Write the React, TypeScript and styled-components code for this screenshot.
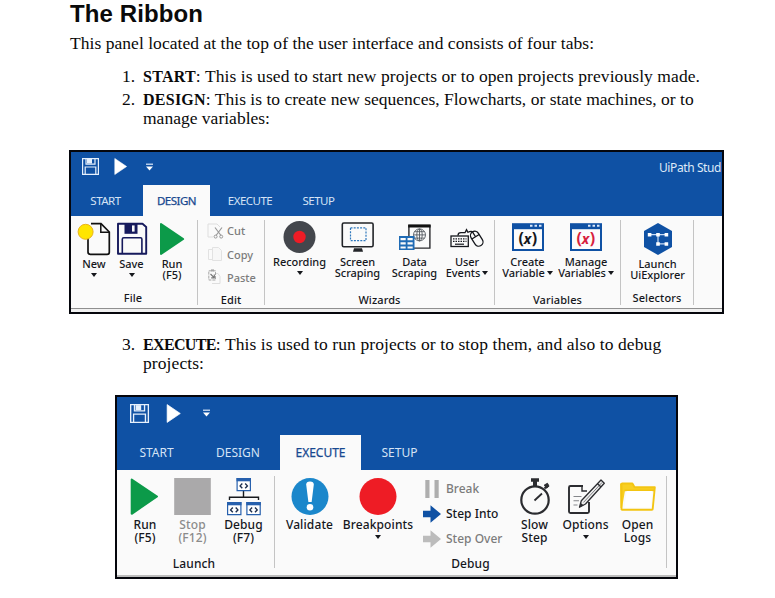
import React from "react";
import styled, { createGlobalStyle, css } from "styled-components";

const BLUE = "#0f51a4";
const NAVY = "#161a5c";

const GlobalStyle = createGlobalStyle`
  * { box-sizing: border-box; }
  body { margin: 0; background: #fff; overflow: hidden; }
  svg { display: block; flex: none; overflow: visible; }
`;

/* ---------- document text ---------- */

const Page = styled.main`
  width: 775px;
  height: 598px;
  padding-left: 69px;
  background: #fff;
  color: #0a0a0a;
  font-family: "Palatino Linotype", "Book Antiqua", "Liberation Serif", serif;
  font-size: 17.5px;
  line-height: 20px;
`;

const Heading = styled.h1`
  margin: 0 0 5px 1px;
  font: bold 24px/28px "Liberation Sans", Arial, sans-serif;
  letter-spacing: 0.1px;
`;

const Paragraph = styled.p`
  margin: 0 0 0 1px;
  letter-spacing: 0.04px;
`;

const Steps = styled.ol<{ $top: number; $height: number }>`
  list-style: none;
  margin: ${(p) => p.$top}px 0 0;
  padding: 0 0 0 53px;
  height: ${(p) => p.$height}px;
  display: flex;
  flex-direction: column;
  gap: 3px;
`;

const Step = styled.li`
  display: grid;
  grid-template-columns: 21px auto;
  align-items: start;
  white-space: nowrap;
  line-height: 20px;
`;

const StepText = styled.div<{ $spacing: number }>`
  letter-spacing: ${(p) => p.$spacing}px;
`;

const Continuation = styled.div`
  margin-top: -1px;
`;

const Term = styled.b<{ $spacing: number }>`
  font-size: 16px;
  line-height: 1;
  letter-spacing: ${(p) => p.$spacing}px;
`;

/* ---------- ribbon shell ---------- */

const Ribbon = styled.section<{ $large?: boolean }>`
  width: ${(p) => (p.$large ? 563 : 655)}px;
  height: ${(p) => (p.$large ? 184 : 164)}px;
  margin-left: ${(p) => (p.$large ? 46 : 0)}px;
  border: 2px solid #05060c;
  background: #fafafa;
  color: #15171c;
  font-family: "Noto Sans", sans-serif;
  font-size: ${(p) => (p.$large ? 12 : 11)}px;
  font-weight: 500;
  line-height: ${(p) => (p.$large ? 13 : 11)}px;
  display: flex;
  flex-direction: column;
  overflow: hidden;
`;

const TitleBar = styled.header<{ $large?: boolean }>`
  height: ${(p) => (p.$large ? 38 : 33)}px;
  flex: none;
  background: ${BLUE};
  display: flex;
  align-items: flex-start;
  padding: ${(p) => (p.$large ? "7px 0 0 13px" : "6px 0 0 11px")};
  gap: ${(p) => (p.$large ? 17 : 15)}px;
`;

const AppTitle = styled.span`
  margin: 4px 1px 0 auto;
  color: #dfe9f7;
  font-size: 12px;
  font-weight: 400;
  letter-spacing: -0.4px;
  white-space: nowrap;
`;

const TabStrip = styled.nav<{ $large?: boolean }>`
  height: ${(p) => (p.$large ? 35 : 31)}px;
  flex: none;
  display: flex;
  background: ${BLUE};
`;

const Tab = styled.span<{ $width: number; $active?: boolean; $large?: boolean; $end?: number }>`
  width: ${(p) => p.$width}px;
  margin-right: ${(p) => p.$end ?? 0}px;
  flex: none;
  display: flex;
  align-items: center;
  justify-content: center;
  font-weight: 400;
  font-size: ${(p) => (p.$large ? 12 : 11.5)}px;
  letter-spacing: ${(p) => (p.$large ? 0 : -0.5)}px;
  color: #d5e3f5;
  ${(p) =>
    p.$active &&
    css`
      background: #fafafa;
      color: #17488f;
      -webkit-text-stroke: 0.25px #17488f;
    `}
`;

const Body = styled.div<{ $large?: boolean }>`
  height: ${(p) => (p.$large ? 105 : 92)}px;
  flex: none;
  display: flex;
`;

const Footer = styled.div<{ $large?: boolean }>`
  flex: 1;
  border-top: ${(p) => (p.$large ? 2 : 1)}px solid ${(p) => (p.$large ? "#bdbdbd" : "#8f8f8f")};
  background: #f0f0f0;
`;

/* ---------- ribbon groups ---------- */

const Group = styled.div<{ $width: number }>`
  width: ${(p) => p.$width}px;
  flex: none;
  display: flex;
  flex-direction: column;
`;

const Divider = styled.i<{ $large?: boolean }>`
  width: 1px;
  flex: none;
  height: ${(p) => (p.$large ? 92 : 85)}px;
  margin-top: ${(p) => (p.$large ? 6 : 4)}px;
  background: #c4c4c4;
`;

const Tools = styled.div<{ $height: number }>`
  height: ${(p) => p.$height}px;
  flex: none;
  display: flex;
`;

const GroupName = styled.div<{ $shift?: number }>`
  text-align: center;
  line-height: 12px;
  letter-spacing: 0.1px;
  padding-left: ${(p) => Math.max(0, p.$shift ?? 0)}px;
  padding-right: ${(p) => Math.max(0, -(p.$shift ?? 0))}px;
`;

const ToolBox = styled.div<{ $width: number; $muted?: boolean; $gap: number; $large?: boolean }>`
  width: ${(p) => p.$width}px;
  flex: none;
  padding-top: ${(p) => (p.$large ? 8 : 6)}px;
  display: flex;
  flex-direction: column;
  align-items: center;
  white-space: nowrap;
  letter-spacing: ${(p) => (p.$large ? 0.12 : -0.05)}px;
  color: ${(p) => (p.$muted ? "#8b8b8b" : "inherit")};

  > svg:first-child {
    margin-bottom: ${(p) => p.$gap}px;
  }
`;

const LabelLine = styled.span`
  display: flex;
  align-items: center;
  gap: 2px;
`;

const Caret = styled.i<{ $below?: boolean }>`
  border: 3.5px solid transparent;
  border-top: 4px solid #15171c;
  border-bottom-width: 0;
  margin-top: ${(p) => (p.$below ? 4 : 1)}px;
`;

const SideList = styled.div<{ $width: number; $pad: number; $top: number; $row: number }>`
  width: ${(p) => p.$width}px;
  flex: none;
  padding: ${(p) => p.$top}px 0 0 ${(p) => p.$pad}px;
  display: grid;
  grid-auto-rows: ${(p) => p.$row}px;
`;

const SideItem = styled.span<{ $muted?: boolean; $gap: number }>`
  display: flex;
  align-items: center;
  gap: ${(p) => p.$gap}px;
  white-space: nowrap;
  color: ${(p) => (p.$muted ? "#7c7c7c" : "inherit")};
`;

interface ToolProps {
  icon: React.ReactNode;
  lines: string[];
  width: number;
  gap?: number;
  caret?: "below" | "inline";
  muted?: boolean;
  large?: boolean;
}

const Tool = ({ icon, lines, width, gap = 2, caret, muted, large }: ToolProps) => (
  <ToolBox $width={width} $gap={gap} $muted={muted} $large={large}>
    {icon}
    {lines.map((line, i) => (
      <LabelLine key={line}>
        {line}
        {caret === "inline" && i === lines.length - 1 && <Caret />}
      </LabelLine>
    ))}
    {caret === "below" && <Caret $below />}
  </ToolBox>
);

/* ---------- icons ---------- */

const Icon = ({ size = 34, children }: { size?: number; children: React.ReactNode }) => (
  <svg width={size} height={size} viewBox={`0 0 ${size} ${size}`} fill="none">
    {children}
  </svg>
);

const QuickIcons = ({ large }: { large?: boolean }) => {
  const k = large ? 1.12 : 1;
  return (
    <>
      <svg width={17 * k} height={17 * k} viewBox="0 0 17 17" fill="none" stroke="#e6f0fc">
        <path d="M.6 .6h15.8v15.8H.6z" strokeWidth="1.2" />
        <path d="M4 .6v5.6h9V.6M3.2 16.4V9h10.6v7.4" strokeWidth="1.2" />
        <path d="M5 1h5v4.5H5z" fill="#e6f0fc" stroke="none" />
      </svg>
      <svg width={large ? 15 : 13} height={large ? 19 : 17} viewBox="0 0 13 17">
        <path d="M.8 .5 12.6 8.5.8 16.5z" fill="#fff" stroke="#fff" strokeWidth=".6" strokeLinejoin="round" />
      </svg>
      <svg width="15" height="18" viewBox={large ? "-1 0 15 18" : "0 0 15 18"}>
        <path d="M4 6.2h7" stroke="#dce9fa" strokeWidth="1.2" />
        <path d="M4 8.6h7L7.5 12.4z" fill="#fff" />
      </svg>
    </>
  );
};

const NewIcon = () => (
  <Icon>
    <path d="M11 15v15q0 2.3 2.3 2.3h17q2 0 2-2V10L24 1.7H14" stroke="#111" strokeWidth="1.7" />
    <path d="M23.8 2v8.2h8.2" stroke="#111" strokeWidth="1.5" />
    <circle cx="8.6" cy="9.8" r="7.5" fill="#ffe500" stroke="#eab31a" />
  </Icon>
);

const SaveIcon = () => (
  <Icon>
    <path d="M3 1.8h24.5L31.2 5v26.8H3z" stroke={NAVY} strokeWidth="1.9" strokeLinejoin="round" />
    <path d="M9.5 1.5h13v10.3h-13z" fill={NAVY} />
    <path d="M17 3.4h2.6v6.2H17z" fill="#fafafa" />
    <path d="M7.3 31.5V17.2q0-1.4 1.4-1.4h16.8q1.4 0 1.4 1.4v14.3" stroke={NAVY} strokeWidth="1.6" />
  </Icon>
);

const RunIcon = () => (
  <Icon>
    <path d="M6 2 28.2 17 6 32z" fill="#0c9a49" stroke="#0c9a49" strokeWidth="2" strokeLinejoin="round" />
  </Icon>
);

const RunLargeIcon = () => (
  <Icon size={38}>
    <path d="M5.7 1.5 31 18.5 5.700 35.8z" fill="#0c9a49" stroke="#0c9a49" strokeWidth="2" strokeLinejoin="round" />
  </Icon>
);

const CutIcon = () => (
  <svg width="17" height="16" viewBox="0 0 17 16" fill="none">
    <path d="M1 1h9l3 3M1 1v13h5" stroke="#dedede" />
    <path d="M8 4.5l6 8M15 4.5l-6 8" stroke="#9a9a9a" strokeWidth="1.2" />
    <circle cx="8.6" cy="13.6" r="1.5" stroke="#9a9a9a" />
    <circle cx="14.2" cy="13.6" r="1.5" stroke="#9a9a9a" />
  </svg>
);

const CopyIcon = () => (
  <svg width="17" height="16" viewBox="0 0 17 16" fill="none" stroke="#e2e2e2">
    <path d="M1.5 3.5h6l2 2v8h-8z" />
    <path d="M5.5 1.5h6l3 3v10h-9z" fill="#f7f7f7" />
  </svg>
);

const PasteIcon = () => (
  <svg width="17" height="16" viewBox="0 0 17 16" fill="none">
    <path d="M9 4.500h2l2 3v7H5" stroke="#dedede" />
    <path d="M1.800 1.800h6.700v9.200H1.800z" stroke="#a5a5a5" strokeDasharray="3 1" />
    <path d="M4 .400h3v2H4z" fill="#a5a5a5" />
    <path d="M3.500 5l3.600 3.600M7.300 5.500v3.300H4.200" stroke="#777" strokeWidth="1.200" />
  </svg>
);

const RecordingIcon = () => (
  <Icon>
    <circle cx="16.5" cy="15" r="16" fill="#43464c" />
    <circle cx="16.5" cy="15" r="6.2" fill="#ee1c25" />
  </Icon>
);

const ScreenIcon = () => (
  <Icon>
    <rect x="1.3" y="1" width="30.8" height="23.800" rx="1.500" stroke="#222428" strokeWidth="1.600" />
    <rect x="9.500" y="5.800" width="15.500" height="12.800" stroke="#2f78bd" strokeWidth="1.200" strokeDasharray="2 1.200" />
    <path d="M13 26.300h8l1 3.400H12z" fill="#222428" />
  </Icon>
);

const DataIcon = () => (
  <Icon>
    <path d="M10.900 3.500h21v22.600h-21z" stroke="#2b2b2e" strokeWidth="1.400" />
    <path d="M10.200 2.500h22.400v3H10.200z" fill="#111" />
    <g stroke="#555a61" strokeWidth=".9">
      <circle cx="21.500" cy="12.900" r="6" fill="#fafafa" />
      <ellipse cx="21.500" cy="12.900" rx="2.700" ry="6" />
      <path d="M15.500 12.900h12M16.500 9.700h10M16.500 16.100h10M21.500 7v12" />
    </g>
    <rect x="1" y="14" width="15.500" height="14" fill="#1f6bb5" />
    <path d="M2.500 16h5.200v2.200H2.500zM9.500 16h5.200v2.200H9.500zM2.500 20.200h5.200v2.200H2.500zM9.500 20.200h5.200v2.200H9.500zM2.500 24.400h5.200v2.200H2.500zM9.500 24.400h5.200v2.200H9.500z" fill="#fafafa" />
  </Icon>
);

const UserEventsIcon = () => (
  <Icon>
    <rect x="1" y="14" width="17.300" height="10.500" stroke="#15171c" strokeWidth="1.300" />
    <path d="M3 16.800h13.500M3 19.300h13.500" stroke="#15171c" strokeWidth="1.300" strokeDasharray="1.500 1" />
    <path d="M5 22.200h9" stroke="#15171c" strokeWidth="1.200" />
    <path d="M8 13.500q0-2.800 3-2.800h4l1.500-3 1.500 2.600q3-1.600 5-.3" stroke="#15171c" strokeWidth="1.300" />
    <g transform="rotate(-32 26.500 16.500)" stroke="#15171c" strokeWidth="1.300">
      <rect x="22.300" y="8.800" width="8.600" height="16" rx="4.300" />
      <path d="M22.300 14.500h8.600M26.600 9v5.500" />
    </g>
  </Icon>
);

const VariableText = styled.text`
  font: italic bold 14px "Noto Sans", sans-serif;
`;

const ParenText = styled.text`
  font: bold 16px "Noto Sans", sans-serif;
`;

const VariableIcon = ({ color }: { color: string }) => (
  <Icon>
    <path d="M2 3h30v25H2z" fill="#fcfcfc" stroke={BLUE} strokeWidth="2" />
    <path d="M1 1.200h32v6H1z" fill={BLUE} />
    <path d="M19 3.700h2.500M23.500 3.700H26M28 3.700h2.500" stroke="#dbe8fa" strokeWidth="2" />
    <ParenText x="7.600" y="22" fill={color}>(</ParenText>
    <VariableText x="12.800" y="22" fill={color}>x</VariableText>
    <ParenText x="20.800" y="22" fill={color}>)</ParenText>
  </Icon>
);

const ExplorerIcon = () => (
  <Icon>
    <path d="M17 1 31 9v16l-14 8-14-8V9z" fill={BLUE} />
    <path d="M8 12.700h18M17 12.700v9.200h9" stroke="#c9dcf5" strokeWidth="1.200" />
    <path d="M6.800 11h3.600v3.600H6.800zM15.200 11h3.600v3.600h-3.600zM23.600 11h3.600v3.600h-3.600zM15.200 20.200h3.600v3.600h-3.600zM23.600 20.200h3.600v3.600h-3.600z" fill="#fff" />
  </Icon>
);

const StopIcon = () => (
  <Icon size={38}>
    <rect x=".200" y="0" width="36.600" height="37" fill="#aaa9aa" />
  </Icon>
);

const CodeWindow = ({ x, y }: { x: number; y: number }) => (
  <g transform={`translate(${x} ${y})`}>
    <path d="M.600 .600h13.300v12H.600z" fill="#fff" stroke="#2760ad" strokeWidth="1.200" />
    <path d="M0 0h14.500v3.300H0z" fill="#2760ad" />
    <path d="M5.800 5.500 3.600 7.900l2.200 2.400M8.700 5.500l2.200 2.400-2.200 2.400" stroke="#1d2e4d" strokeWidth="1.400" />
  </g>
);

const DebugIcon = () => (
  <Icon size={38}>
    <path d="M18.500 12v7.500M4.500 22v-2.700h29V22" stroke="#17191d" strokeWidth="1.400" />
    <CodeWindow x={11.5} y={0} />
    <CodeWindow x={2} y={24} />
    <CodeWindow x={21.3} y={24} />
  </Icon>
);

const ValidateIcon = () => (
  <Icon size={38}>
    <circle cx="19" cy="18.500" r="18.500" fill="#1b87cb" />
    <path d="M15.200 6.500Q15.200 3.600 19 3.600T22.800 6.500L20.600 24h-3.200z" fill="#fff" />
    <circle cx="19" cy="29.200" r="3.300" fill="#fff" />
  </Icon>
);

const BreakpointIcon = () => (
  <Icon size={38}>
    <circle cx="19" cy="18.500" r="18.500" fill="#ee1c25" />
  </Icon>
);

const PauseIcon = () => (
  <svg width="18" height="18" viewBox="0 0 18 18">
    <path d="M2.300 0h4.200v18H2.300zM11.500 0h4.200v18h-4.200z" fill="#aeaeae" />
  </svg>
);

const ArrowIcon = ({ color }: { color: string }) => (
  <svg width="18" height="18" viewBox="0 0 18 18">
    <path d="M0 5.800h7.500V.3L18 9 7.500 17.700V12.200H0z" fill={color} />
  </svg>
);

const StopwatchIcon = () => (
  <Icon size={38}>
    <circle cx="19" cy="22" r="13.700" stroke="#2b2c30" strokeWidth="2.200" />
    <path d="M15 .300h8v3.400h-2V8h-4V3.700h-2z" fill="#2b2c30" />
    <path d="M28.500 10.500 31 8" stroke="#2b2c30" strokeWidth="2" />
    <path d="m28.300 7 3.200-1.700 1.500 2.900-2.500 2z" fill="#2b2c30" stroke="#2b2c30" />
    <path d="M18.500 22.500 26 15.500" stroke="#2b2c30" strokeWidth="1.800" />
  </Icon>
);

const OptionsIcon = () => (
  <Icon size={38}>
    <path d="M16 8H3.500q-1.500 0-1.500 1.500v24Q2 35 3.500 35h17q1.500 0 1.500-1.500V24" stroke="#2b2c30" strokeWidth="1.900" />
    <path d="M15 7.500v5.500h5" stroke="#2b2c30" strokeWidth="1.400" />
    <path d="M6.500 18.500h8M6.500 22.800h5.500M6.500 27h4" stroke="#85878b" strokeWidth="1.100" />
    <path d="M34 2 37.300 5.200 18.500 26l-6 3.200 1.800-6.400z" fill="#f0f0f0" stroke="#2b2c30" strokeWidth="1.300" strokeLinejoin="round" />
    <path d="m16.500 24.400 18.600-20" stroke="#77797d" strokeWidth="1" />
    <path d="m12.500 29.200 1.300-4.200 2.800 2.200z" fill="#2b2c30" />
    <path d="m30.500 5.800 3.300 3" stroke="#2b2c30" strokeWidth="1.300" />
  </Icon>
);

const FolderIcon = () => (
  <Icon size={38}>
    <path d="M1 5.500h12.500l2.500 4h19.500v3H6L3 30H1.500z" fill="#f8cf22" />
    <path d="M2.500 31.500V6.200q0-.700.700-.700h10.200l2.200 3.800h20.200L33.700 31q0 .800-.800.800H3.200zM5.500 12.400H35" stroke="#f3c513" strokeWidth="1.900" strokeLinejoin="round" />
    <path d="M7.500 13h26l-1.800 16.500H5.500z" fill="#fff" />
  </Icon>
);

/* ---------- ribbons ---------- */

const DesignRibbon = () => (
  <Ribbon>
    <TitleBar>
      <QuickIcons />
      <AppTitle>UiPath Stud</AppTitle>
    </TitleBar>
    <TabStrip>
      <Tab $width={69} $end={3}>START</Tab>
      <Tab $width={67} $active>DESIGN</Tab>
      <Tab $width={80}>EXECUTE</Tab>
      <Tab $width={57}>SETUP</Tab>
    </TabStrip>
    <Body>
      <Group $width={126}>
        <Tools $height={76}>
          <Tool width={46} icon={<NewIcon />} lines={["New"]} caret="below" />
          <Tool width={29} icon={<SaveIcon />} lines={["Save"]} caret="below" />
          <Tool width={52} icon={<RunIcon />} lines={["Run", "(F5)"]} />
        </Tools>
        <GroupName $shift={-2}>File</GroupName>
      </Group>
      <Divider />
      <Group $width={66}>
        <Tools $height={78}>
          <SideList $width={66} $pad={9} $top={3} $row={23.4}>
            <SideItem $muted $gap={3}><CutIcon />Cut</SideItem>
            <SideItem $muted $gap={3}><CopyIcon />Copy</SideItem>
            <SideItem $muted $gap={3}><PasteIcon />Paste</SideItem>
          </SideList>
        </Tools>
        <GroupName>Edit</GroupName>
      </Group>
      <Divider />
      <Group $width={229}>
        <Tools $height={78}>
          <Tool width={69} gap={0} icon={<RecordingIcon />} lines={["Recording"]} caret="below" />
          <Tool width={47} gap={0} icon={<ScreenIcon />} lines={["Screen", "Scraping"]} />
          <Tool width={67} gap={0} icon={<DataIcon />} lines={["Data", "Scraping"]} />
          <Tool width={38} gap={0} icon={<UserEventsIcon />} lines={["User", "Events"]} caret="inline" />
        </Tools>
        <GroupName>Wizards</GroupName>
      </Group>
      <Divider />
      <Group $width={125}>
        <Tools $height={78}>
          <Tool width={65} gap={0} icon={<VariableIcon color="#15171c" />} lines={["Create", "Variable"]} caret="inline" />
          <Tool width={52} gap={0} icon={<VariableIcon color="#d81f3f" />} lines={["Manage", "Variables"]} caret="inline" />
        </Tools>
        <GroupName>Variables</GroupName>
      </Group>
      <Divider />
      <Group $width={72}>
        <Tools $height={76}>
          <Tool width={73} icon={<ExplorerIcon />} lines={["Launch", "UiExplorer"]} />
        </Tools>
        <GroupName>Selectors</GroupName>
      </Group>
      <Divider />
    </Body>
    <Footer />
  </Ribbon>
);

const ExecuteRibbon = () => (
  <Ribbon $large>
    <TitleBar $large>
      <QuickIcons large />
    </TitleBar>
    <TabStrip $large>
      <Tab $large $width={79}>START</Tab>
      <Tab $large $width={84}>DESIGN</Tab>
      <Tab $large $width={81} $active>EXECUTE</Tab>
      <Tab $large $width={77}>SETUP</Tab>
    </TabStrip>
    <Body $large>
      <Group $width={157}>
        <Tools $height={88}>
          <Tool large width={56} icon={<RunLargeIcon />} lines={["Run", "(F5)"]} />
          <Tool large width={39} icon={<StopIcon />} lines={["Stop", "(F12)"]} muted />
          <Tool large width={63} icon={<DebugIcon />} lines={["Debug", "(F7)"]} />
        </Tools>
        <GroupName $shift={-3}>Launch</GroupName>
      </Group>
      <Divider $large />
      <Group $width={391}>
        <Tools $height={88}>
          <Tool large width={69} icon={<ValidateIcon />} lines={["Validate"]} />
          <Tool large width={68} icon={<BreakpointIcon />} lines={["Breakpoints"]} caret="below" />
          <SideList $width={101} $pad={11} $top={6} $row={25}>
            <SideItem $muted $gap={5}><PauseIcon />Break</SideItem>
            <SideItem $gap={5}><ArrowIcon color={BLUE} />Step Into</SideItem>
            <SideItem $muted $gap={5}><ArrowIcon color="#bcbcbc" />Step Over</SideItem>
          </SideList>
          <Tool large width={43} icon={<StopwatchIcon />} lines={["Slow", "Step"]} />
          <Tool large width={59} icon={<OptionsIcon />} lines={["Options"]} caret="below" />
          <Tool large width={45} icon={<FolderIcon />} lines={["Open", "Logs"]} />
        </Tools>
        <GroupName>Debug</GroupName>
      </Group>
      <Divider $large />
    </Body>
    <Footer $large />
  </Ribbon>
);

export default function App() {
  return (
    <>
      <GlobalStyle />
      <Page>
        <Heading>The Ribbon</Heading>
        <Paragraph>
          This panel located at the top of the user interface and consists of four tabs:
        </Paragraph>
        <Steps $top={13} $height={84}>
          <Step>
            <span>1.</span>
            <StepText $spacing={0.08}>
              <Term $spacing={0.25}>START</Term>: This is used to start new projects or to open projects previously made.
            </StepText>
          </Step>
          <Step>
            <span>2.</span>
            <StepText $spacing={0.01}>
              <Term $spacing={0.25}>DESIGN</Term>: This is to create new sequences, Flowcharts, or state machines, or to
              <Continuation>manage variables:</Continuation>
            </StepText>
          </Step>
        </Steps>
        <DesignRibbon />
        <Steps $top={20} $height={61}>
          <Step>
            <span>3.</span>
            <StepText $spacing={0.09}>
              <Term $spacing={-0.65}>EXECUTE</Term>: This is used to run projects or to stop them, and also to debug
              <Continuation>projects:</Continuation>
            </StepText>
          </Step>
        </Steps>
        <ExecuteRibbon />
      </Page>
    </>
  );
}
